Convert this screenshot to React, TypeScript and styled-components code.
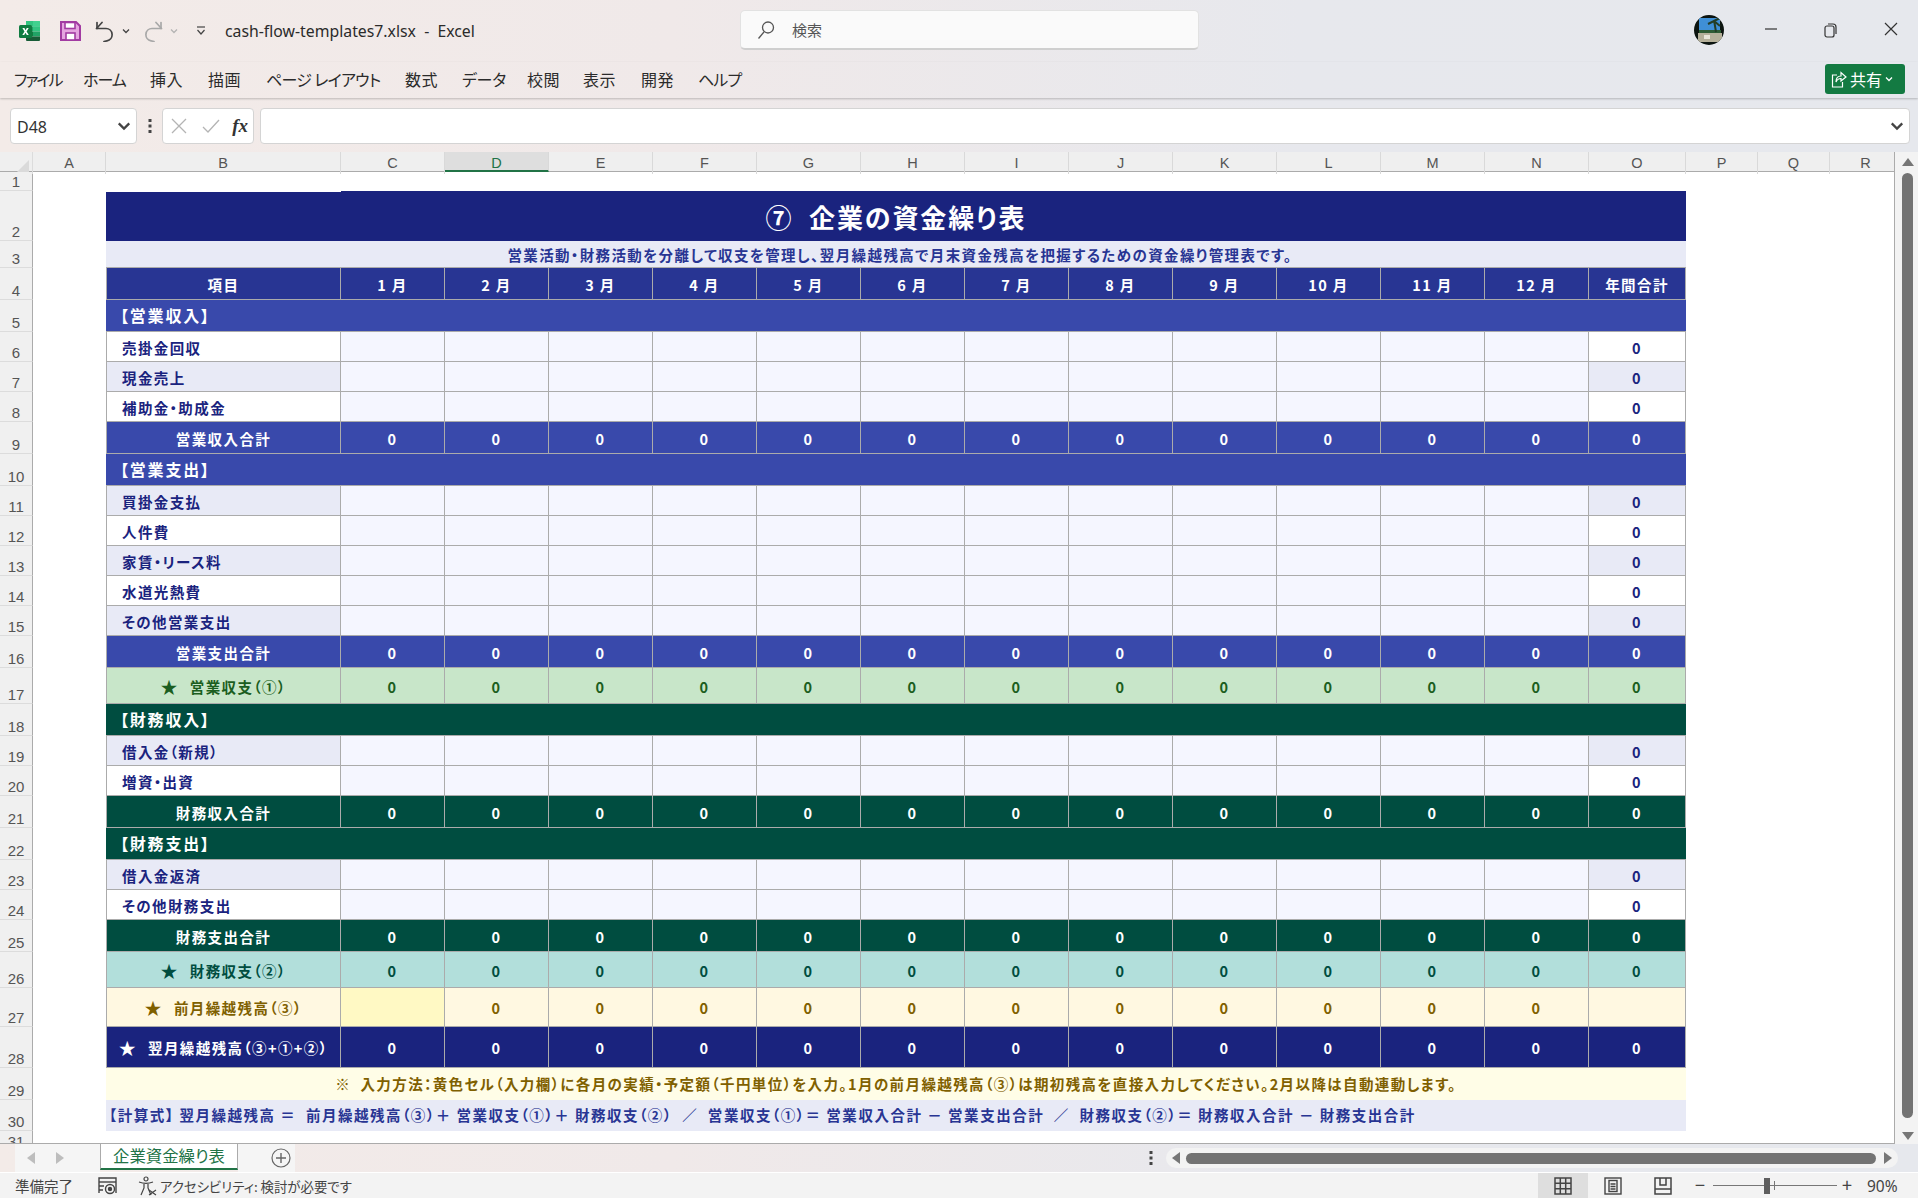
import React from "react";
import styled, { createGlobalStyle } from "styled-components";

const JP = `"Noto Sans CJK JP", "Noto Sans", sans-serif`;
const LINE = "#ababab";

const GlobalStyle = createGlobalStyle`
  html, body { margin: 0; padding: 0; background: #fff; }
  * { box-sizing: border-box; }
`;

const Window = styled.div`
  width: 1918px;
  height: 1198px;
  overflow: hidden;
  display: flex;
  flex-direction: column;
  font-family: ${JP};
  background: #fff;
`;

const Chrome = styled.div`
  background: linear-gradient(90deg, #f3ebe8 0%, #f0e9e9 35%, #e7e8ed 68%, #e6e8ed 100%);
`;

/* ---------- title bar ---------- */
const TitleBar = styled.div`
  height: 62px;
  display: flex;
  align-items: center;
  padding-left: 19px;
`;

const IconSlot = styled.div<{ $w: number; $ml?: number }>`
  width: ${(p) => p.$w}px;
  margin-left: ${(p) => p.$ml ?? 0}px;
  flex: none;
  display: flex;
  align-items: center;
  justify-content: center;
`;

const FileName = styled.div`
  margin-left: 18px;
  width: 301px;
  flex: none;
  font-family: "Noto Sans", sans-serif;
  font-size: 15.8px;
  color: #2b2b2b;
  white-space: pre;
`;

const SearchBox = styled.div`
  margin-left: 214px;
  margin-top: -2px;
  width: 459px;
  height: 40px;
  flex: none;
  background: #fafafa;
  border-radius: 5px;
  border: 1px solid #e2e2e2;
  border-bottom: 2px solid #cfcfcf;
  display: flex;
  align-items: center;
  padding-left: 15px;
  gap: 16px;
  font-size: 15px;
  color: #555;
`;

const Avatar = styled.div`
  margin-left: 495px;
  margin-top: -2px;
  width: 30px;
  height: 30px;
  flex: none;
  border-radius: 50%;
  overflow: hidden;
`;

const WinControls = styled.div`
  margin-left: 17px;
  margin-top: -3px;
  display: flex;
  width: 180px;
`;

const WinButton = styled.div`
  width: 60px;
  display: flex;
  justify-content: center;
`;

/* ---------- ribbon tabs ---------- */
const RibbonTabs = styled.div`
  height: 36px;
  display: flex;
  align-items: flex-start;
  position: relative;
  box-shadow: 0 1px 2px rgba(0, 0, 0, 0.22);
`;

const TabLabels = styled.div`
  display: flex;
  flex: 1;
  height: 33px;
  align-items: center;
  padding-left: 14px;
`;

const TabLabel = styled.span<{ $w: number; $sp?: number }>`
  width: ${(p) => p.$w}px;
  flex: none;
  font-size: 16px;
  letter-spacing: ${(p) => p.$sp ?? 0.4}px;
  color: #2b2b2b;
  white-space: pre;
  font-feature-settings: "palt";
`;

const ShareButton = styled.div`
  width: 80px;
  height: 30px;
  margin: 2px 13px 0 0;
  flex: none;
  background: #137a42;
  border-radius: 3px;
  color: #fff;
  font-size: 16px;
  display: flex;
  align-items: center;
  padding-left: 6px;
  gap: 3px;
`;

/* ---------- formula bar ---------- */
const FormulaBar = styled.div`
  height: 54px;
  display: flex;
  align-items: flex-start;
  padding: 10px 8px 0 10px;
`;

const FieldBox = styled.div<{ $w?: number }>`
  height: 36px;
  width: ${(p) => (p.$w ? `${p.$w}px` : "auto")};
  flex: ${(p) => (p.$w ? "none" : 1)};
  background: #fff;
  border: 1px solid #d4d4d4;
  border-radius: 4px;
  display: flex;
  align-items: center;
  justify-content: space-between;
  color: #333;
`;

const NameValue = styled.span`
  font-family: "Noto Sans", sans-serif;
  font-size: 16px;
  margin-left: 6px;
  padding-top: 2px;
  color: #333;
`;

const ChevronEnd = styled.div`
  width: 14px;
  margin-right: 5px;
  display: flex;
  align-items: center;
  justify-content: center;
`;

const Dots = styled.div<{ $w: number }>`
  width: ${(p) => p.$w}px;
  flex: none;
  height: 36px;
  display: flex;
  align-items: center;
  justify-content: center;
`;

const FxMark = styled.span`
  font-family: "Liberation Serif", serif;
  font-style: italic;
  font-weight: 700;
  font-size: 19px;
  color: #333;
  margin-right: 5px;
`;

/* ---------- sheet ---------- */
const SheetArea = styled.div`
  height: 992px;
  display: flex;
  background: #f3f3f3;
`;

const Sheet = styled.div`
  width: 1895px;
  height: 992px;
  overflow: hidden;
  background: #fff;
  border-right: 1px solid ${LINE};
  border-bottom: 1px solid ${LINE};
`;

const COLUMNS = "33px 73px 235px repeat(12, 104px) 97px 72px 72px 72px";

const HeaderRow = styled.div`
  height: 20px;
  display: grid;
  grid-template-columns: ${COLUMNS};
  background: #efefef;
  border-bottom: 1px solid ${LINE};
`;

const Corner = styled.div`
  border-right: 1px solid #dcdcdc;
  position: relative;
  &::after {
    content: "";
    position: absolute;
    right: 3px;
    bottom: 2px;
    border-style: solid;
    border-width: 0 0 12px 12px;
    border-color: transparent transparent #dadada transparent;
  }
`;

const ColHead = styled.div<{ $active?: boolean }>`
  font-family: "Liberation Sans", sans-serif;
  font-size: 14.5px;
  font-weight: 400;
  line-height: 22px;
  text-align: center;
  color: ${(p) => (p.$active ? "#217346" : "#555")};
  background: ${(p) => (p.$active ? "#dedede" : "transparent")};
  border-right: 1px solid #d9d9d9;
  border-bottom: ${(p) => (p.$active ? "2px solid #217346" : "none")};
  height: ${(p) => (p.$active ? "20px" : "auto")};
`;

const SheetRow = styled.div<{ $h: number }>`
  height: ${(p) => p.$h}px;
  display: grid;
  grid-template-columns: ${COLUMNS};
  font-feature-settings: "palt";
`;

const RowNum = styled.div`
  background: #f0f0f0;
  border-right: 1px solid ${LINE};
  border-bottom: 1px solid #dcdcdc;
  font-family: "Liberation Sans", sans-serif;
  font-size: 15px;
  line-height: 17px;
  color: #555;
  display: flex;
  align-items: flex-end;
  justify-content: center;
`;

type Tone = {
  bg: string;
  fg: string;
};

const Cell = styled.div<{ $bg: string; $fg: string; $align?: string; $start?: boolean }>`
  background: ${(p) => p.$bg};
  color: ${(p) => p.$fg};
  border-right: 1px solid ${LINE};
  border-bottom: 1px solid ${LINE};
  border-left: ${(p) => (p.$start ? `1px solid ${LINE}` : "none")};
  display: flex;
  align-items: center;
  justify-content: ${(p) => p.$align ?? "center"};
  padding-left: ${(p) => (p.$align === "flex-start" ? "15px" : "0")};
  padding-top: 1px;
  font-size: 14.5px;
  font-weight: 700;
  letter-spacing: 1.4px;
  white-space: pre;
`;

const HeadCell = styled(Cell)`
  padding-top: 2px;
`;

const Banner = styled.div<{ $bg: string; $fg: string; $size: number; $align?: string; $pad?: number; $line?: boolean; $sp?: number; $lift?: number; $notch?: boolean }>`
  grid-column: 3 / 17;
  position: relative;
  background: ${(p) => p.$bg};
  color: ${(p) => p.$fg};
  font-size: ${(p) => p.$size}px;
  font-weight: 700;
  letter-spacing: ${(p) => p.$sp ?? 1.4}px;
  display: flex;
  align-items: center;
  justify-content: ${(p) => p.$align ?? "flex-start"};
  padding-left: ${(p) => p.$pad ?? 0}px;
  padding-bottom: ${(p) => p.$lift ?? 0}px;
  border-bottom: ${(p) => (p.$line ? `1px solid ${LINE}` : "none")};
  white-space: pre;
  &::before {
    content: "";
    display: ${(p) => (p.$notch ? "block" : "none")};
    position: absolute;
    left: 0;
    top: 0;
    width: 235px;
    height: 1px;
    background: #fff;
  }
`;

const Star = styled.span`
  font-size: 17px;
  margin-right: 11px;
`;

/* ---------- scroll bars ---------- */
const VScroll = styled.div`
  flex: 1;
  position: relative;
  background: #f3f3f3;
`;

const VThumb = styled.div`
  position: absolute;
  left: 7px;
  top: 21px;
  width: 11px;
  height: 945px;
  border-radius: 6px;
  background: #737373;
`;

const Arrow = styled.div<{ $dir: "up" | "down" | "left" | "right"; $c?: string }>`
  width: 0;
  height: 0;
  border-style: solid;
  flex: none;
  ${(p) => {
    const c = p.$c ?? "#767676";
    if (p.$dir === "up") return `border-width:0 6px 8px 6px;border-color:transparent transparent ${c} transparent;`;
    if (p.$dir === "down") return `border-width:8px 6px 0 6px;border-color:${c} transparent transparent transparent;`;
    if (p.$dir === "left") return `border-width:6px 8px 6px 0;border-color:transparent ${c} transparent transparent;`;
    return `border-width:6px 0 6px 8px;border-color:transparent transparent transparent ${c};`;
  }}
`;

const VArrowTop = styled.div`
  position: absolute;
  left: 7px;
  top: 6px;
`;

const VArrowBottom = styled.div`
  position: absolute;
  left: 7px;
  bottom: 4px;
`;

/* ---------- sheet tabs ---------- */
const TabStrip = styled.div`
  height: 28px;
  display: flex;
  align-items: stretch;
  padding-left: 15px;
`;

const NavBox = styled.div`
  width: 85px;
  flex: none;
  background: #f5f5f5;
  display: flex;
  align-items: center;
  padding-left: 12px;
  gap: 21px;
`;

const ActiveTab = styled.div`
  width: 138px;
  flex: none;
  height: 26px;
  background: #fff;
  border-left: 1px solid ${LINE};
  border-right: 1px solid ${LINE};
  border-bottom: 2px solid #217346;
  color: #217346;
  font-size: 16.4px;
  padding-bottom: 3px;
  display: flex;
  align-items: center;
  justify-content: center;
  font-feature-settings: "palt";
`;

const AddBox = styled.div`
  width: 57px;
  flex: none;
  background: #f5f5f5;
  display: flex;
  align-items: center;
  justify-content: center;
  padding-left: 28px;
`;

const StripDots = styled.div`
  margin-left: 847px;
  width: 18px;
  display: flex;
  align-items: center;
  justify-content: center;
`;

const HScroll = styled.div`
  margin-left: 6px;
  margin-top: 4px;
  width: 732px;
  height: 20px;
  flex: none;
  background: #f3f3f3;
  border-radius: 10px;
  display: flex;
  align-items: center;
  padding: 0 6px;
`;

const HThumb = styled.div`
  margin-left: 6px;
  margin-right: 8px;
  flex: 1;
  height: 11px;
  border-radius: 6px;
  background: #737373;
`;

/* ---------- status bar ---------- */
const StatusBar = styled.div`
  height: 26px;
  background: #f3f3f3;
  display: flex;
  align-items: stretch;
  font-size: 14px;
  color: #444;
  font-feature-settings: "palt";
  border-top: 1px solid #fff;
`;

const StatusText = styled.div<{ $w: number; $ml: number; $size?: number }>`
  width: ${(p) => p.$w}px;
  margin-left: ${(p) => p.$ml}px;
  flex: none;
  display: flex;
  align-items: center;
  gap: 3px;
  font-size: ${(p) => p.$size ?? 13.4}px;
  white-space: pre;
  > svg {
    flex: none;
  }
`;

const ViewButton = styled.div<{ $on?: boolean; $ml?: number }>`
  width: 50px;
  flex: none;
  margin-left: ${(p) => p.$ml ?? 0}px;
  background: ${(p) => (p.$on ? "#dedede" : "transparent")};
  display: flex;
  align-items: center;
  justify-content: center;
`;

const ZoomTrack = styled.div`
  width: 124px;
  margin-left: 6px;
  flex: none;
  position: relative;
  &::before {
    content: "";
    position: absolute;
    left: 0;
    right: 0;
    top: 12px;
    height: 1px;
    background: #777;
  }
`;

const ZoomThumb = styled.div`
  position: absolute;
  left: 51px;
  top: 5px;
  width: 6px;
  height: 16px;
  background: #5f5f5f;
`;

const ZoomTick = styled.div`
  position: absolute;
  left: 61px;
  top: 8px;
  width: 1px;
  height: 9px;
  background: #777;
`;

const ZoomSign = styled.div<{ $ml: number }>`
  margin-left: ${(p) => p.$ml}px;
  width: 14px;
  font-size: 18px;
  line-height: 22px;
  text-align: center;
  color: #444;
  flex: none;
`;

const Percent = styled.div`
  margin-left: 13px;
  font-family: "Noto Sans", sans-serif;
  font-size: 15.5px;
  display: flex;
  align-items: center;
`;

/* ---------- icons ---------- */
const ExcelIcon = () => (
  <svg width="22" height="20" viewBox="0 0 22 20">
    <path d="M7 0h13a1 1 0 0 1 1 1v4.500H7z" fill="#33c481" />
    <path d="M14 0h6a1 1 0 0 1 1 1v4.500h-7z" fill="#41d18f" />
    <rect x="7" y="5.500" width="7" height="5" fill="#21a366" />
    <rect x="14" y="5.500" width="7" height="5" fill="#33c481" />
    <rect x="7" y="10.500" width="7" height="5" fill="#107c41" />
    <rect x="14" y="10.500" width="7" height="5" fill="#21a366" />
    <path d="M7 15.500h14V19a1 1 0 0 1-1 1H8a1 1 0 0 1-1-1z" fill="#185c37" />
    <rect x="0" y="4" width="13" height="13" rx="1.500" fill="#107c41" />
    <path d="M3.400 7h2l1.200 2.200L7.800 7h1.900l-2.100 3.400 2.200 3.600H7.800l-1.300-2.300L5.200 14H3.300l2.200-3.600z" fill="#fff" />
  </svg>
);

const SaveIcon = () => (
  <svg width="21" height="20" viewBox="0 0 21 20">
    <path d="M1 1h15l4 4v14H1z" fill="#e5a5e0" stroke="#a23ba2" strokeWidth="2" />
    <rect x="5" y="1.500" width="10" height="6" fill="#fff" stroke="#a23ba2" strokeWidth="1.600" />
    <rect x="6" y="12" width="9" height="7" fill="#fff" stroke="#a23ba2" strokeWidth="1.600" />
  </svg>
);

const UndoIcon = ({ color, flip }: { color: string; flip?: boolean }) => (
  <svg
    width="20"
    height="21"
    viewBox="0 0 20 21"
    fill="none"
    stroke={color}
    strokeWidth="1.700"
    strokeLinecap="round"
    strokeLinejoin="round"
    transform={flip ? "scale(-1 1)" : undefined}
  >
    <path d="M7 1.500 1.500 7.500H11a6.200 6.200 0 0 1 1 12.300l-3 .7" />
    <path d="M2 1.500v6" />
  </svg>
);

const Chevron = ({ color, size = 8 }: { color: string; size?: number }) => (
  <svg width={size} height={size} viewBox="0 0 8 8" fill="none" stroke={color} strokeWidth="1.300">
    <path d="M1 2.500 4 5.500 7 2.500" />
  </svg>
);

const QatIcon = () => (
  <svg width="10" height="10" viewBox="0 0 10 10" fill="none" stroke="#444" strokeWidth="1.200">
    <path d="M1 1h8" />
    <path d="M1.500 4 5 8l3.500-4" />
  </svg>
);

const SearchIcon = () => (
  <svg width="20" height="20" viewBox="0 0 20 20" fill="none" stroke="#555" strokeWidth="1.300">
    <circle cx="12" cy="7.500" r="5.500" />
    <path d="M8 12 2.500 18.500" />
  </svg>
);

const AvatarPic = () => (
  <svg width="30" height="30" viewBox="0 0 30 30">
    <rect width="30" height="30" fill="#0c1410" />
    <rect x="5" y="3" width="21" height="13" fill="#3f8fd6" />
    <rect x="5" y="15" width="22" height="4" fill="#2f5c35" />
    <rect x="4" y="18" width="24" height="9" fill="#b5b09a" />
    <path d="M22 17 20 5M20 6l-6 3M20 6l6-3M20 6l6 5" stroke="#243d26" strokeWidth="2" fill="none" />
    <rect x="10" y="20" width="6" height="4" fill="#e9e6da" />
  </svg>
);

const MinIcon = () => (
  <svg width="14" height="14" viewBox="0 0 14 14" stroke="#333" strokeWidth="1.200"><path d="M1 7h12" /></svg>
);

const RestoreIcon = () => (
  <svg width="14" height="16" viewBox="0 0 14 16" fill="none" stroke="#333" strokeWidth="1.200">
    <rect x="1" y="4" width="9" height="11" rx="2" />
    <path d="M4 2h5a3 3 0 0 1 3 3v7" />
  </svg>
);

const CloseIcon = () => (
  <svg width="14" height="14" viewBox="0 0 14 14" stroke="#333" strokeWidth="1.200"><path d="M1 1l12 12M13 1 1 13" /></svg>
);

const ShareIcon = () => (
  <svg width="16" height="18" viewBox="0 0 16 18" fill="none" stroke="#fff" strokeWidth="1.200">
    <path d="M6 5H1.500v12h10v-5" />
    <path d="M5 12c0-4 2-6 5-6V2.500L15 7l-5 4V8.500c-2 0-4 1-5 3.500z" />
  </svg>
);

const XMark = () => (
  <svg width="16" height="16" viewBox="0 0 16 16" stroke="#b4b4b4" strokeWidth="1.300"><path d="M1 1l14 14M15 1 1 15" /></svg>
);

const CheckMark = () => (
  <svg width="18" height="14" viewBox="0 0 18 14" fill="none" stroke="#b4b4b4" strokeWidth="1.300"><path d="M1 8l5 5L17 1" /></svg>
);

const VDots = () => (
  <svg width="4" height="16" viewBox="0 0 4 16" fill="#444">
    <rect x="0.500" y="1" width="3" height="3" />
    <rect x="0.500" y="6.500" width="3" height="3" />
    <rect x="0.500" y="12" width="3" height="3" />
  </svg>
);

const AddIcon = () => (
  <svg width="20" height="20" viewBox="0 0 20 20" fill="none" stroke="#666" strokeWidth="1.200">
    <circle cx="10" cy="10" r="9" />
    <path d="M10 5v10M5 10h10" strokeWidth="1.400" />
  </svg>
);

const MacroIcon = () => (
  <svg width="19" height="18" viewBox="0 0 19 18" fill="none" stroke="#444" strokeWidth="1.400">
    <path d="M1 16V1h17v15" />
    <path d="M1 5h17" />
    <path d="M1 9h5M1 13h4" />
    <circle cx="12" cy="12" r="4.500" />
    <circle cx="12" cy="12" r="1.500" fill="#444" />
  </svg>
);

const AccessIcon = () => (
  <svg width="19" height="20" viewBox="0 0 19 20" fill="none" stroke="#444" strokeWidth="1.200">
    <circle cx="8" cy="3" r="2" />
    <path d="M1 6c4 1.500 10 1.500 14 0M6 8v4l-3 7M10 8v4l3 7" />
    <path d="M11 14l7 5M18 14l-7 5" />
  </svg>
);

const NormalIcon = () => (
  <svg width="18" height="18" viewBox="0 0 18 18" fill="none" stroke="#444" strokeWidth="1.500">
    <rect x="1" y="1" width="16" height="16" />
    <path d="M6.300 1v16M11.700 1v16M1 6.300h16M1 11.700h16" />
  </svg>
);

const PageIcon = () => (
  <svg width="18" height="18" viewBox="0 0 18 18" fill="none" stroke="#444" strokeWidth="1.400">
    <rect x="1" y="1" width="16" height="16" />
    <rect x="5" y="3.500" width="8" height="11" />
    <path d="M6.500 7h5M6.500 9.500h5M6.500 12h5" />
  </svg>
);

const BreakIcon = () => (
  <svg width="18" height="18" viewBox="0 0 18 18" fill="none" stroke="#444" strokeWidth="1.500">
    <path d="M1 1h16v16H1z" />
    <path d="M6 1v7h6V1M1 12h16" />
  </svg>
);

/* ---------- data ---------- */
const LETTERS = ["C", "D", "E", "F", "G", "H", "I", "J", "K", "L", "M", "N", "O", "P", "Q", "R"];
const MONTHS = ["1 月", "2 月", "3 月", "4 月", "5 月", "6 月", "7 月", "8 月", "9 月", "10 月", "11 月", "12 月"];
const MONTH_KEYS = MONTHS.map((_, i) => i);

const NAVY = "#1a237e";
const INPUT_BG = "#f5f6ff";
const ZEBRA = "#e8eaf6";
const HEAD_BG = "#283593";

const BLUE: Tone = { bg: "#3949ab", fg: "#fff" };
const TEAL: Tone = { bg: "#004d40", fg: "#fff" };
const GREEN_SUM: Tone = { bg: "#c8e6c9", fg: "#1b5e20" };
const TEAL_SUM: Tone = { bg: "#b2dfdb", fg: "#004d40" };
const CARRY: Tone = { bg: "#fff8e1", fg: "#7f6000" };
const FINAL: Tone = { bg: "#1a237e", fg: "#fff" };

const Gutter = () => <div />;
const Tail = () => (
  <>
    <div />
    <div />
    <div />
  </>
);

const InputRow = ({ n, label, zebra }: { n: number; label: string; zebra?: boolean }) => {
  const bg = zebra ? ZEBRA : "#fff";
  return (
    <SheetRow $h={30}>
      <RowNum>{n}</RowNum>
      <Gutter />
      <Cell $bg={bg} $fg={NAVY} $align="flex-start" $start>{label}</Cell>
      {MONTH_KEYS.map((m) => (
        <Cell key={m} $bg={INPUT_BG} $fg={NAVY} />
      ))}
      <Cell $bg={bg} $fg={NAVY}>0</Cell>
      <Tail />
    </SheetRow>
  );
};

const SumRow = ({ n, h, label, tone, star }: { n: number; h: number; label: string; tone: Tone; star?: boolean }) => (
  <SheetRow $h={h}>
    <RowNum>{n}</RowNum>
    <Gutter />
    <Cell $bg={tone.bg} $fg={tone.fg} $start>
      {star && <Star>★</Star>}
      {label}
    </Cell>
    {MONTH_KEYS.map((m) => (
      <Cell key={m} $bg={tone.bg} $fg={tone.fg}>0</Cell>
    ))}
    <Cell $bg={tone.bg} $fg={tone.fg}>0</Cell>
    <Tail />
  </SheetRow>
);

const SectionRow = ({ n, label, bg }: { n: number; label: string; bg: string }) => (
  <SheetRow $h={32}>
    <RowNum>{n}</RowNum>
    <Gutter />
    <Banner $bg={bg} $fg="#fff" $size={16} $pad={14} $line $lift={1} $sp={1.8}>{label}</Banner>
    <Tail />
  </SheetRow>
);

export default function App() {
  return (
    <Window>
      <GlobalStyle />
      <Chrome>
        <TitleBar>
          <IconSlot $w={22}><ExcelIcon /></IconSlot>
          <IconSlot $w={21} $ml={19}><SaveIcon /></IconSlot>
          <IconSlot $w={20} $ml={14}><UndoIcon color="#444" /></IconSlot>
          <IconSlot $w={12} $ml={5}><Chevron color="#444" /></IconSlot>
          <IconSlot $w={20} $ml={11}><UndoIcon color="#a8a8a8" flip /></IconSlot>
          <IconSlot $w={12} $ml={5}><Chevron color="#b4b4b4" /></IconSlot>
          <IconSlot $w={12} $ml={15}><QatIcon /></IconSlot>
          <FileName>{"cash-flow-templates7.xlsx  -  Excel"}</FileName>
          <SearchBox><SearchIcon />検索</SearchBox>
          <Avatar><AvatarPic /></Avatar>
          <WinControls>
            <WinButton><MinIcon /></WinButton>
            <WinButton><RestoreIcon /></WinButton>
            <WinButton><CloseIcon /></WinButton>
          </WinControls>
        </TitleBar>
        <RibbonTabs>
          <TabLabels>
            <TabLabel $w={69} $sp={-2}>ファイル</TabLabel>
            <TabLabel $w={67} $sp={-1}>ホーム</TabLabel>
            <TabLabel $w={58}>挿入</TabLabel>
            <TabLabel $w={58}>描画</TabLabel>
            <TabLabel $w={139} $sp={-0.7}>ページ レイアウト</TabLabel>
            <TabLabel $w={57}>数式</TabLabel>
            <TabLabel $w={65} $sp={-0.3}>データ</TabLabel>
            <TabLabel $w={56}>校閲</TabLabel>
            <TabLabel $w={58}>表示</TabLabel>
            <TabLabel $w={57}>開発</TabLabel>
            <TabLabel $w={50} $sp={-0.9}>ヘルプ</TabLabel>
          </TabLabels>
          <ShareButton>
            <ShareIcon />
            共有
            <Chevron color="#fff" size={8} />
          </ShareButton>
        </RibbonTabs>
        <FormulaBar>
          <FieldBox $w={127}>
            <NameValue>D48</NameValue>
            <ChevronEnd><Chevron color="#444" size={14} /></ChevronEnd>
          </FieldBox>
          <Dots $w={25}><VDots /></Dots>
          <FieldBox $w={92}>
            <IconSlot $w={18} $ml={7}><XMark /></IconSlot>
            <IconSlot $w={18} $ml={2}><CheckMark /></IconSlot>
            <FxMark>fx</FxMark>
          </FieldBox>
          <IconSlot $w={6} />
          <FieldBox>
            <span />
            <ChevronEnd><Chevron color="#444" size={16} /></ChevronEnd>
          </FieldBox>
        </FormulaBar>
      </Chrome>

      <SheetArea>
        <Sheet>
          <HeaderRow>
            <Corner />
            <ColHead>A</ColHead>
            <ColHead>B</ColHead>
            {LETTERS.map((l) => (
              <ColHead key={l} $active={l === "D"}>{l}</ColHead>
            ))}
          </HeaderRow>

          <SheetRow $h={19}><RowNum>1</RowNum></SheetRow>
          <SheetRow $h={50}>
            <RowNum>2</RowNum>
            <Gutter />
            <Banner $bg={NAVY} $fg="#fff" $size={26} $align="center" $sp={1.9} $notch>{"⑦  企業の資金繰り表"}</Banner>
            <Tail />
          </SheetRow>
          <SheetRow $h={27}>
            <RowNum>3</RowNum>
            <Gutter />
            <Banner $bg={ZEBRA} $fg={HEAD_BG} $size={14.5} $align="center" $pad={8} $line>
              営業活動・財務活動を分離して収支を管理し、翌月繰越残高で月末資金残高を把握するための資金繰り管理表です。
            </Banner>
            <Tail />
          </SheetRow>
          <SheetRow $h={32}>
            <RowNum>4</RowNum>
            <Gutter />
            <HeadCell $bg={HEAD_BG} $fg="#fff" $start>項目</HeadCell>
            {MONTHS.map((m) => (
              <HeadCell key={m} $bg={HEAD_BG} $fg="#fff">{m}</HeadCell>
            ))}
            <HeadCell $bg={HEAD_BG} $fg="#fff">年間合計</HeadCell>
            <Tail />
          </SheetRow>

          <SectionRow n={5} label="【営業収入】" bg={BLUE.bg} />
          <InputRow n={6} label="売掛金回収" />
          <InputRow n={7} label="現金売上" zebra />
          <InputRow n={8} label="補助金・助成金" />
          <SumRow n={9} h={32} label="営業収入合計" tone={BLUE} />
          <SectionRow n={10} label="【営業支出】" bg={BLUE.bg} />
          <InputRow n={11} label="買掛金支払" zebra />
          <InputRow n={12} label="人件費" />
          <InputRow n={13} label="家賃・リース料" zebra />
          <InputRow n={14} label="水道光熱費" />
          <InputRow n={15} label="その他営業支出" zebra />
          <SumRow n={16} h={32} label="営業支出合計" tone={BLUE} />
          <SumRow n={17} h={36} label="営業収支（①）" tone={GREEN_SUM} star />
          <SectionRow n={18} label="【財務収入】" bg={TEAL.bg} />
          <InputRow n={19} label="借入金（新規）" zebra />
          <InputRow n={20} label="増資・出資" />
          <SumRow n={21} h={32} label="財務収入合計" tone={TEAL} />
          <SectionRow n={22} label="【財務支出】" bg={TEAL.bg} />
          <InputRow n={23} label="借入金返済" zebra />
          <InputRow n={24} label="その他財務支出" />
          <SumRow n={25} h={32} label="財務支出合計" tone={TEAL} />
          <SumRow n={26} h={36} label="財務収支（②）" tone={TEAL_SUM} star />

          <SheetRow $h={39}>
            <RowNum>27</RowNum>
            <Gutter />
            <Cell $bg={CARRY.bg} $fg={CARRY.fg} $start><Star>★</Star>前月繰越残高（③）</Cell>
            <Cell $bg="#fff9c4" $fg={CARRY.fg} />
            {MONTH_KEYS.slice(1).map((m) => (
              <Cell key={m} $bg={CARRY.bg} $fg={CARRY.fg}>0</Cell>
            ))}
            <Cell $bg={CARRY.bg} $fg={CARRY.fg} />
            <Tail />
          </SheetRow>

          <SumRow n={28} h={41} label="翌月繰越残高（③+①+②）" tone={FINAL} star />

          <SheetRow $h={32}>
            <RowNum>29</RowNum>
            <Gutter />
            <Banner $bg="#fffde7" $fg="#7f6000" $size={14.5} $align="center" $lift={2}>
              {"※  入力方法：黄色セル（入力欄）に各月の実績・予定額（千円単位）を入力。1月の前月繰越残高（③）は期初残高を直接入力してください。2月以降は自動連動します。"}
            </Banner>
            <Tail />
          </SheetRow>
          <SheetRow $h={31}>
            <RowNum>30</RowNum>
            <Gutter />
            <Banner $bg={ZEBRA} $fg={HEAD_BG} $size={14.5} $pad={3} $lift={2} $sp={1.52}>
              {"【計算式】 翌月繰越残高 ＝  前月繰越残高（③）＋ 営業収支（①）＋ 財務収支（②）  ／  営業収支（①）＝ 営業収入合計 － 営業支出合計  ／  財務収支（②）＝ 財務収入合計 － 財務支出合計"}
            </Banner>
            <Tail />
          </SheetRow>
          <SheetRow $h={20}><RowNum>31</RowNum></SheetRow>
        </Sheet>
        <VScroll>
          <VArrowTop><Arrow $dir="up" /></VArrowTop>
          <VThumb />
          <VArrowBottom><Arrow $dir="down" /></VArrowBottom>
        </VScroll>
      </SheetArea>

      <Chrome>
        <TabStrip>
          <NavBox>
            <Arrow $dir="left" $c="#bdbdbd" />
            <Arrow $dir="right" $c="#bdbdbd" />
          </NavBox>
          <ActiveTab>企業資金繰り表</ActiveTab>
          <AddBox><AddIcon /></AddBox>
          <StripDots><VDots /></StripDots>
          <HScroll>
            <Arrow $dir="left" />
            <HThumb />
            <Arrow $dir="right" />
          </HScroll>
        </TabStrip>
      </Chrome>

      <StatusBar>
        <StatusText $w={60} $ml={15} $size={14.5}>準備完了</StatusText>
        <StatusText $w={20} $ml={23}><MacroIcon /></StatusText>
        <StatusText $w={214} $ml={20}><AccessIcon />アクセシビリティ: 検討が必要です</StatusText>
        <ViewButton $on $ml={1186}><NormalIcon /></ViewButton>
        <ViewButton><PageIcon /></ViewButton>
        <ViewButton><BreakIcon /></ViewButton>
        <ZoomSign $ml={5}>−</ZoomSign>
        <ZoomTrack><ZoomThumb /><ZoomTick /></ZoomTrack>
        <ZoomSign $ml={3}>+</ZoomSign>
        <Percent>90%</Percent>
      </StatusBar>
    </Window>
  );
}
